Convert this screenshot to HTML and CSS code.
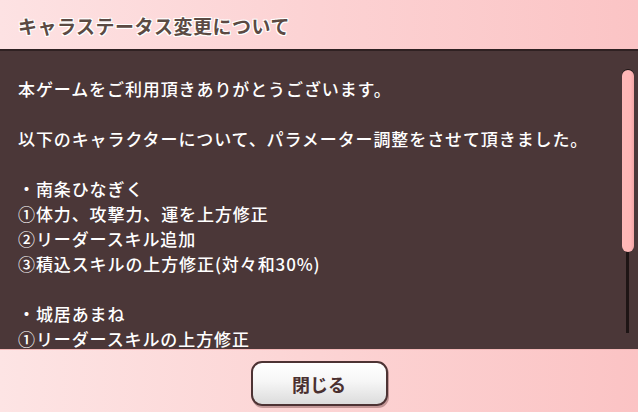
FILE: index.html
```html
<!DOCTYPE html>
<html lang="ja">
<head>
<meta charset="utf-8">
<link rel="stylesheet" href="styles.css">
</head>
<body>
<div class="dialog">
  <div class="header"><h1 class="title">キャラステータス変更について</h1></div>
  <div class="content">
    <div class="text">
      <p>本ゲームをご利用頂きありがとうございます。</p>
      <p class="blank">&nbsp;</p>
      <p>以下のキャラクターについて、パラメーター調整をさせて頂きました。</p>
      <p class="blank">&nbsp;</p>
      <p>・南条ひなぎく</p>
      <p>①体力、攻撃力、運を上方修正</p>
      <p>②リーダースキル追加</p>
      <p>③積込スキルの上方修正(対々和30%)</p>
      <p class="blank">&nbsp;</p>
      <p>・城居あまね</p>
      <p>①リーダースキルの上方修正</p>
    </div>
    <div class="scrollbar"><div class="track"></div><div class="thumb"></div></div>
  </div>
  <div class="footer"><button class="close">閉じる</button></div>
</div>
</body>
</html>
```

FILE: styles.css
```css
html, body {
  margin: 0;
  padding: 0;
}
body {
  width: 638px;
  height: 412px;
  overflow: hidden;
  font-family: "Noto Sans CJK JP", "Noto Sans", sans-serif;
}
.dialog {
  display: flex;
  flex-direction: column;
  height: 412px;
}
.header {
  height: 49px;
  flex: none;
  display: flex;
  align-items: center;
  padding-left: 18px;
  background: linear-gradient(90deg, #fde2e3 0%, #fcd2d3 50%, #fbc4c5 100%);
}
.title {
  margin: 0;
  font-size: 19px;
  font-weight: bold;
  letter-spacing: 0.5px;
  color: #5b4a43;
  line-height: 1;
  text-shadow: 1px 1px 0 #fff, -1px 1px 0 #fff, 1px -1px 0 #fff, -1px -1px 0 #fff, 0 1px 0 #fff, 1px 0 0 #fff;
  margin-top: 2px;
}
.content {
  flex: 1;
  position: relative;
  overflow: hidden;
  background: #4b3738;
  border-top: 2px solid #2f2122;
}
.text {
  padding: 25px 0 0 18px;
  color: #fff;
  font-size: 17px;
  font-weight: 500;
  letter-spacing: 0.9px;
  line-height: 25px;
}
.text p {
  margin: 0;
  white-space: nowrap;
}
.scrollbar {
  position: absolute;
  top: 19px;
  left: 622px;
  width: 12px;
  height: 263px;
}
.track {
  position: absolute;
  left: 4px;
  top: 0;
  width: 3px;
  height: 100%;
  background: #1e1515;
}
.thumb {
  position: absolute;
  left: 0;
  top: 0;
  width: 12px;
  height: 182px;
  border-radius: 6px;
  background: linear-gradient(90deg, #ffb8b8 0%, #ffb6b6 70%, #f2a4a4 100%);
  box-shadow: 0 -1px 0 #1e1515;
}
.footer {
  height: 63px;
  flex: none;
  display: flex;
  justify-content: center;
  align-items: flex-start;
  padding-top: 11px;
  box-sizing: border-box;
  background: linear-gradient(90deg, #fde4e4 0%, #fcd4d4 50%, #fbc3c4 100%);
  border-top: 1px solid #f4b8b8;
}
.close {
  width: 137px;
  height: 45px;
  border: 2px solid #4d3334;
  border-radius: 11px;
  background: linear-gradient(180deg, #ffffff 0%, #f6f6f6 45%, #dcdcdc 100%);
  box-shadow: 1px 2px 0 rgba(90, 40, 40, 0.35);
  font-family: "Noto Sans CJK JP", "Noto Sans", sans-serif;
  font-size: 18px;
  font-weight: bold;
  color: #4a3030;
  padding: 0;
  line-height: 1;
}
```
